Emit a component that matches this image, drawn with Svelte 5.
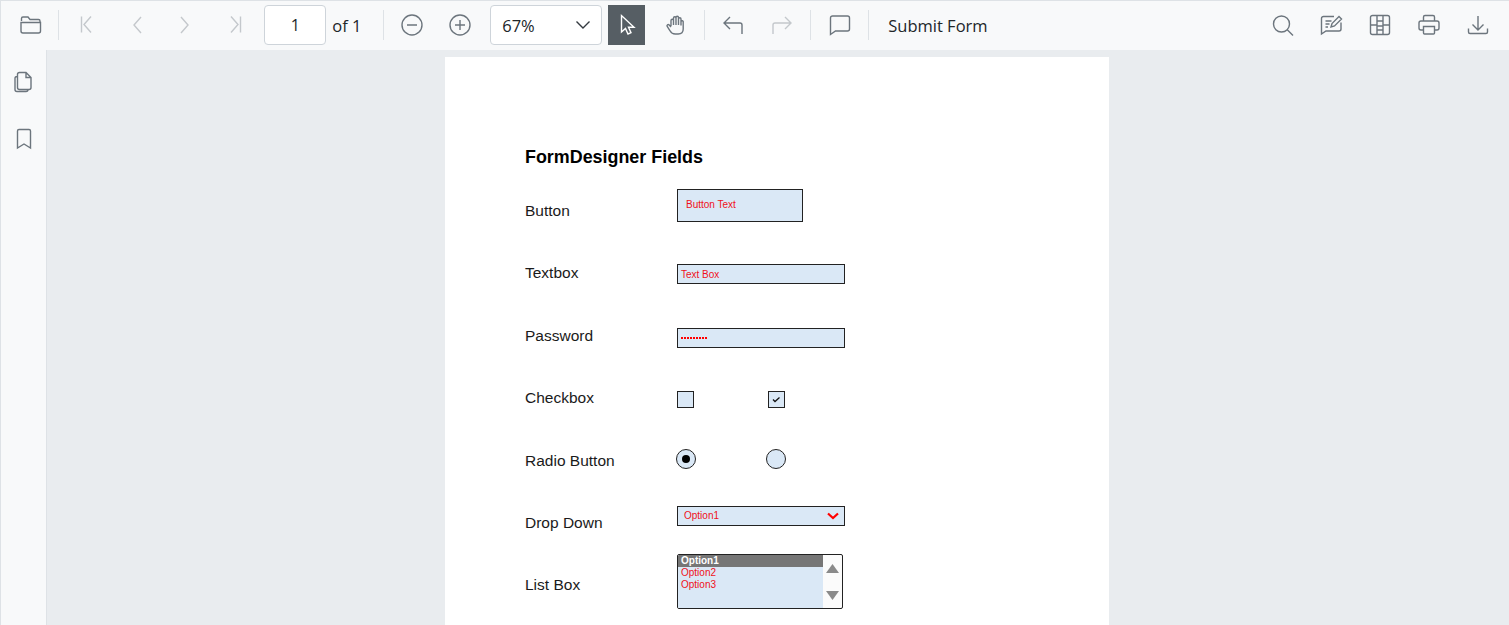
<script>
	const icons = {
		folder: 'M2.5 8V5.5A1.5 1.5 0 0 1 4 4h5l2 2.5h8.5A1.5 1.5 0 0 1 21 8v1M2 9.5h19.5V18a2 2 0 0 1-2 2H4a2 2 0 0 1-2-2z',
		first: 'M5.5 3.5v16M15 3.5l-7 8 7 8',
		prev: 'M16 4l-7 8 7 8',
		next: 'M8 4l7 8-7 8',
		last: 'M18.5 3.5v16M9 3.5l7 8-7 8',
		minus: 'M12 2a10 10 0 1 0 0 20 10 10 0 0 0 0-20zM7 12h10',
		plus: 'M12 2a10 10 0 1 0 0 20 10 10 0 0 0 0-20zM7 12h10M12 7v10',
		cursor: 'M6.500 2.500v16.500l4-3.500 2.500 5.500 3-1.300-2.500-5.500h5.500z',
		hand: 'M7 13V7.5a1.2 1.2 0 0 1 2.5 0V12V5a1.2 1.2 0 0 1 2.5 0v7V4.5a1.2 1.2 0 0 1 2.5 0V12V6a1.2 1.2 0 0 1 2.5 0v6.5V8.5a1.2 1.2 0 0 1 2.2 0V16c0 3-2 5-5 5h-3c-2.5 0-4-1-5-3l-3-4.5c-.8-1.4.9-2.6 2-1.5L7 14',
		undo: 'M9 4L3 10l6 6M3.500 10H19a2 2 0 0 1 2 2v9',
		redo: 'M15 4l6 6-6 6M20.500 10H5a2 2 0 0 0-2 2v9',
		comment: 'M4.500 3h15a2 2 0 0 1 2 2v11a2 2 0 0 1-2 2H7.500l-5 3.500V5a2 2 0 0 1 2-2z',
		search: 'M10.500 3a8 8 0 1 0 0 16 8 8 0 0 0 0-16zM16 16.500l6 6',
		annotate: 'M15 3.500H4.500a2 2 0 0 0-2 2V21l4.500-3h13a2 2 0 0 0 2-2V9.500M6.500 8h6M6.500 11h4M6.500 14h2.500M12 14l1-3.500 7-7 2.500 2.500-7 7z',
		grid: 'M4.500 2.500h15a2 2 0 0 1 2 2v15a2 2 0 0 1-2 2h-15a2 2 0 0 1-2-2v-15a2 2 0 0 1 2-2zM9 2.500v19M15 2.500v19M2.500 12h6.500M15 12h6.500M9 8h6M9 13h6M9 17h6',
		print: 'M6.500 8V4a1.500 1.500 0 0 1 1.500-1.500h8A1.500 1.500 0 0 1 17.500 4v4M6 17H4a2 2 0 0 1-2-2v-5a2 2 0 0 1 2-2h16a2 2 0 0 1 2 2v5a2 2 0 0 1-2 2h-2M6.500 13.500h11V20a1 1 0 0 1-1 1h-9a1 1 0 0 1-1-1z',
		download: 'M12 3v14M6.500 11.500L12 17l5.500-5.500M2.500 15.500V19a1.500 1.500 0 0 0 1.500 1.500h16a1.500 1.500 0 0 0 1.500-1.500v-3.500',
		pages: 'M7.500 2.500h6.500l5 5v10a2 2 0 0 1-2 2h-9.500a2 2 0 0 1-2-2v-13a2 2 0 0 1 2-2zM14 2.500v5h5M5.500 6.500H5a2 2 0 0 0-2 2v11a2 2 0 0 0 2 2h9a2 2 0 0 0 2-2',
		bookmark: 'M7 2.500h10a1.500 1.500 0 0 1 1.500 1.500v17l-6.500-4-6.500 4V4A1.500 1.500 0 0 1 7 2.500z'
	};
	const fields = ['Button', 'Textbox', 'Password', 'Checkbox', 'Radio Button', 'Drop Down', 'List Box'];
</script>

{#snippet icon(name, off = false)}
	<button class="btn" class:off tabindex="-1">
		<svg viewBox="0 0 24 24" width="24" height="24"><path d={icons[name]} /></svg>
	</button>
{/snippet}

<div class="viewer">
	<header class="toolbar">
		{@render icon('folder')}
		<span class="sep sep-nav"></span>
		{@render icon('first', true)}
		{@render icon('prev', true)}
		{@render icon('next', true)}
		{@render icon('last', true)}
		<div class="page-input">1</div>
		<span class="of">of 1</span>
		<span class="sep sep-of"></span>
		{@render icon('minus')}
		{@render icon('plus')}
		<div class="zoom-select">
			<span>67%</span>
			<svg viewBox="0 0 16 10" width="16" height="10"><path d="M1.500 1.500L8 8l6.500-6.500" /></svg>
		</div>
		<button class="btn select-tool" tabindex="-1">
			<svg viewBox="0 0 24 24" width="24" height="24"><path d={icons.cursor} /></svg>
		</button>
		<div class="hand">{@render icon('hand')}</div>
		<span class="sep"></span>
		{@render icon('undo')}
		{@render icon('redo', true)}
		<span class="sep sep-comment"></span>
		{@render icon('comment')}
		<span class="sep"></span>
		<span class="submit">Submit Form</span>
		<div class="right">
			{@render icon('search')}
			{@render icon('annotate')}
			{@render icon('grid')}
			{@render icon('print')}
			{@render icon('download')}
		</div>
	</header>

	<div class="body">
		<aside class="sidebar">
			{@render icon('pages')}
			{@render icon('bookmark')}
		</aside>
		<main class="canvas">
			<section class="page">
				<h1>FormDesigner Fields</h1>
				{#each fields as label}
					<div class="row">
						<span class="label">{label}</span>
						<div class="field">
							{#if label === 'Button'}
								<div class="form-btn">Button Text</div>
							{:else if label === 'Textbox'}
								<div class="input">Text Box</div>
							{:else if label === 'Password'}
								<div class="input pw"><span class="dots"></span></div>
							{:else if label === 'Checkbox'}
								<div class="pair check-pair">
									<span class="check"></span>
									<span class="check">
										<svg viewBox="0 0 15 15" width="15" height="15"><path d="M4 7.500l2 2 4.500-4" /></svg>
									</span>
								</div>
							{:else if label === 'Radio Button'}
								<div class="pair radio-pair">
									<span class="radio"><span class="dot"></span></span>
									<span class="radio"></span>
								</div>
							{:else if label === 'Drop Down'}
								<div class="input dropdown">
									<span>Option1</span>
									<svg viewBox="0 0 12 8" width="12" height="8"><path d="M1 1.500l5 4.500 5-4.500" /></svg>
								</div>
							{:else}
								<div class="listbox">
									<div class="options">
										<div class="opt selected">Option1</div>
										<div class="opt">Option2</div>
										<div class="opt">Option3</div>
									</div>
									<div class="scroll">
										<span class="arrow up"></span>
										<span class="arrow down"></span>
									</div>
								</div>
							{/if}
						</div>
					</div>
				{/each}
			</section>
		</main>
	</div>
</div>

<style>
	:global(body) {
		margin: 0;
		overflow: hidden;
	}
	.viewer {
		width: 1509px;
		height: 625px;
		overflow: hidden;
		display: flex;
		flex-direction: column;
		font-family: "Open Sans", "Noto Sans", sans-serif;
		color: #212529;
		background: #e9ecef;
	}
	.toolbar {
		height: 50px;
		box-sizing: border-box;
		flex: none;
		display: flex;
		align-items: center;
		padding-left: 5.250px;
		background: #f8f9fa;
		border-top: 1px solid #dee2e6;
		border-left: 1px solid #dee2e6;
		padding-bottom: 1px;
	}
	.btn {
		width: 48.500px;
		height: 40px;
		flex: none;
		padding: 0;
		border: 0;
		background: none;
		display: flex;
		align-items: center;
		justify-content: center;
	}
	.btn path {
		fill: none;
		stroke: #6c757d;
		stroke-width: 1.400;
	}
	.btn.off path {
		stroke: #c4c8cc;
	}
	.sep {
		width: 1px;
		height: 30px;
		background: #dee2e6;
		margin: 0 4px;
		flex: none;
	}
	.sep-nav {
		margin: 0 4.500px 0 3.500px;
	}
	.page-input {
		width: 62px;
		height: 40px;
		box-sizing: border-box;
		margin-left: 6.500px;
		border: 1px solid #ced4da;
		border-radius: 4px;
		background: #fff;
		text-align: center;
		font-size: 16px;
		line-height: 38px;
	}
	.of {
		margin-left: 6px;
		width: 29px;
		font-size: 16.500px;
		white-space: nowrap;
	}
	.sep-of {
		margin-left: 22px;
		margin-right: 3px;
	}
	.zoom-select {
		width: 112px;
		height: 40px;
		box-sizing: border-box;
		margin-left: 6px;
		padding: 0 10px 0 11px;
		border: 1px solid #ced4da;
		border-radius: 4px;
		background: #fff;
		display: flex;
		align-items: center;
		justify-content: space-between;
		font-size: 16.500px;
	}
	.zoom-select path {
		fill: none;
		stroke: #343a40;
		stroke-width: 1.400;
	}
	.select-tool {
		width: 37px;
		margin-left: 6px;
		background: #565e64;
	}
	.select-tool path {
		stroke: #fff;
	}
	.hand {
		margin-left: 6px;
	}
	.sep-comment {
		margin-right: 5px;
	}
	.submit {
		margin-left: 15px;
		font-size: 16.500px;
		white-space: nowrap;
	}
	.right {
		margin-left: auto;
		margin-right: 7px;
		display: flex;
	}
	.right .btn {
		width: 48.750px;
	}
	.body {
		flex: 1;
		display: flex;
		min-height: 0;
	}
	.sidebar {
		width: 47px;
		box-sizing: border-box;
		flex: none;
		padding-top: 12px;
		display: flex;
		flex-direction: column;
		gap: 17px;
		background: #f8f9fa;
		border-left: 1px solid #dee2e6;
		border-right: 1px solid #dee2e6;
	}
	.sidebar .btn {
		width: 45px;
	}
	.canvas {
		flex: 1;
		min-width: 0;
		display: flex;
		justify-content: center;
		padding: 7px 2px 0 0;
	}
	.page {
		width: 664px;
		height: 860px;
		flex: none;
		box-sizing: border-box;
		background: #fff;
		padding: 89px 0 0 80px;
		font-family: "Liberation Sans", Arial, sans-serif;
	}
	h1 {
		margin: 0 0 11.500px;
		font-size: 17.900px;
		line-height: 22px;
		font-weight: 700;
		color: #000;
	}
	.row {
		height: 62.500px;
		display: grid;
		grid-template-columns: 152px 1fr;
	}
	.row:last-child {
		margin-top: -0.500px;
	}
	.label {
		font-size: 15.500px;
		line-height: 62.500px;
		color: #1a1a1a;
	}
	.row:nth-of-type(1) .field { padding-top: 9px; }
	.form-btn {
		width: 126px;
		height: 33px;
		box-sizing: border-box;
		padding: 8px 0 0 8px;
		border: 1px solid #222;
		background: #dae8f6;
		color: #f01020;
		font-size: 10px;
		line-height: 14px;
	}
	.input {
		width: 168px;
		height: 20px;
		box-sizing: border-box;
		margin-top: 22px;
		padding-left: 3px;
		border: 1px solid #222;
		background: #dae8f6;
		color: #f01020;
		font-size: 10px;
		line-height: 20px;
	}
	.pw {
		margin-top: 23.500px;
		display: flex;
		align-items: center;
	}
	.dots {
		width: 27px;
		height: 2px;
		background: repeating-linear-gradient(90deg, #f00 0 2px, transparent 2px 3px);
	}
	.pair {
		display: flex;
	}
	.check-pair {
		margin-top: 24px;
		gap: 74px;
	}
	.check {
		width: 17px;
		height: 17px;
		box-sizing: border-box;
		border: 1px solid #222;
		background: #dae8f6;
	}
	.check svg {
		display: block;
	}
	.check path {
		fill: none;
		stroke: #111;
		stroke-width: 1.300;
	}
	.radio-pair {
		margin-top: 19.500px;
		margin-left: -1px;
		gap: 70px;
	}
	.radio {
		width: 20px;
		height: 20px;
		box-sizing: border-box;
		border: 1px solid #222;
		border-radius: 50%;
		background: #dae8f6;
		display: flex;
		align-items: center;
		justify-content: center;
	}
	.dot {
		width: 8px;
		height: 8px;
		border-radius: 50%;
		background: #000;
	}
	.dropdown {
		margin-top: 14px;
		padding: 0 5px 0 6px;
		display: flex;
		align-items: center;
		justify-content: space-between;
	}
	.dropdown path {
		fill: none;
		stroke: #f00;
		stroke-width: 2.200;
	}
	.listbox {
		width: 166px;
		height: 55px;
		box-sizing: border-box;
		display: flex;
		border: 1px solid #222;
		border-radius: 2px;
		overflow: hidden;
		background: #fbfbfb;
	}
	.options {
		width: 145px;
		background: #dae8f6;
		color: #f01020;
		font-size: 10px;
		line-height: 12px;
	}
	.opt {
		padding-left: 3px;
	}
	.selected {
		background: #767676;
		color: #fff;
		font-weight: 700;
	}
	.scroll {
		flex: 1;
		display: flex;
		flex-direction: column;
		align-items: center;
		justify-content: space-between;
		padding: 9px 0 8px;
	}
	.arrow {
		width: 13px;
		height: 9px;
		background: #8a8a8a;
	}
	.up {
		clip-path: polygon(50% 0, 100% 100%, 0 100%);
	}
	.down {
		clip-path: polygon(0 0, 100% 0, 50% 100%);
	}
</style>
